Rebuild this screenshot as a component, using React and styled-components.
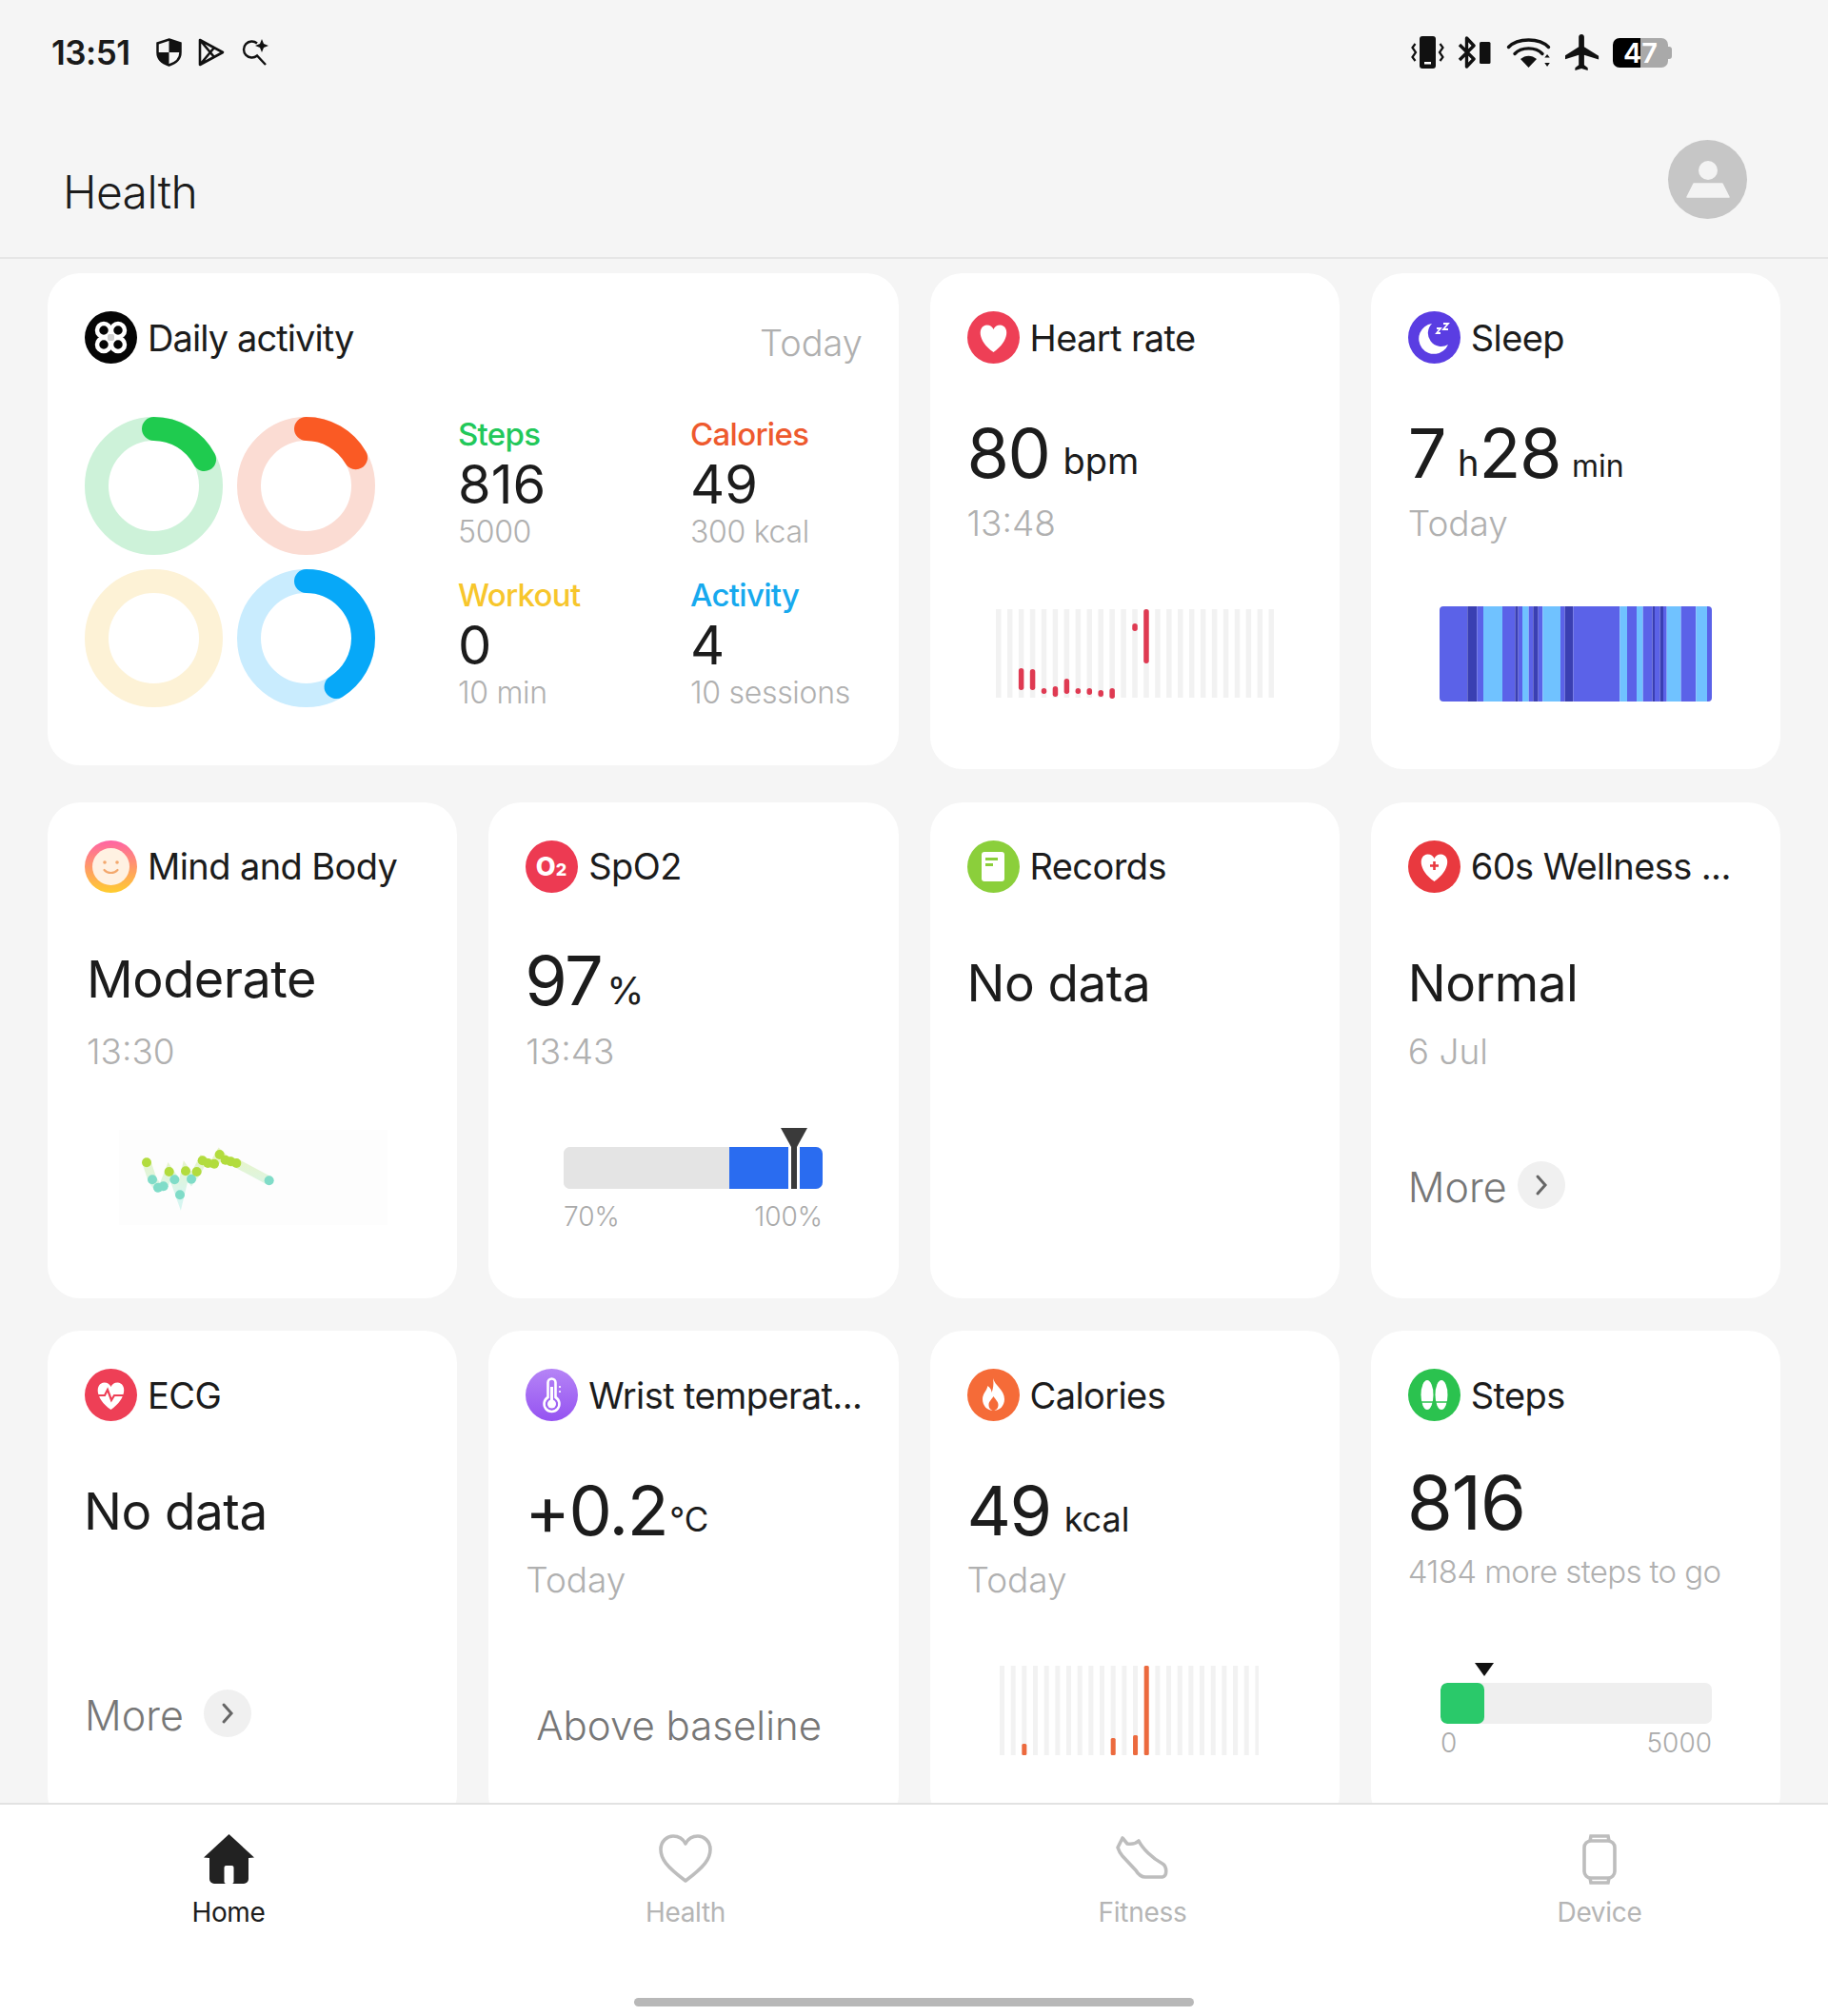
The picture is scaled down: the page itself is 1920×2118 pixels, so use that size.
import React from 'react';
import styled, { createGlobalStyle } from 'styled-components';

const Global = createGlobalStyle`
  html, body { margin: 0; padding: 0; background: #f5f5f5; }
  body { font-family: Inter, "Noto Sans", "Liberation Sans", sans-serif; color: #1c1c1c; -webkit-font-smoothing: antialiased; }
  * { box-sizing: border-box; }
`;

const Screen = styled.div`
  width: 1920px; height: 2118px; display: flex; flex-direction: column; overflow: hidden; background: #f5f5f5;
`;
const StatusBar = styled.div`
  height: 110px; flex: none; display: flex; align-items: center; padding: 0 0 0 54px;
`;
const Clock = styled.span`
  font-size: 35px; font-weight: 600; line-height: 40px; letter-spacing: -0.5px; color: #1a1a1a; margin-right: 27px;
`;
const LeftIcons = styled.div`display: flex; align-items: center; gap: 17px;`;
const RightIcons = styled.div`
  margin-left: auto; margin-right: 168px; display: flex; align-items: center; gap: 14px;
`;
const Battery = styled.div`
  position: relative; width: 58px; height: 31px; border-radius: 7px; display: flex; align-items: center; justify-content: center;
  background: linear-gradient(90deg, #000 0 50%, #a9a9a9 50% 100%);
  color: #fff; font-size: 29px; font-weight: 600; line-height: 31px;
  &::after { content: ''; position: absolute; right: -4px; top: 9px; width: 4px; height: 13px; border-radius: 0 3px 3px 0; background: #a9a9a9; }
`;
const Header = styled.header`
  height: 162px; flex: none; display: flex; padding: 37px 85px 0 66px; justify-content: space-between; border-bottom: 2px solid #e6e6e6;
`;
const PageTitle = styled.h1`
  margin: 25px 0 0; font-size: 48px; font-weight: 300; line-height: 60px; letter-spacing: -0.6px; color: #1c1c1c;
`;
const Main = styled.main`
  flex: 1; min-height: 0; overflow: hidden; padding: 15px 50px 0;
  display: grid; grid-template-columns: repeat(4, 1fr); grid-template-rows: repeat(3, 521px); gap: 34.5px 33px; align-content: start;
`;
const Card = styled.section`
  background: #fff; border-radius: 34px; padding: 40px 39px 0; min-width: 0;
  grid-column: span ${p => p.$span || 1};
  height: ${p => p.$h || 521}px; align-self: start;
`;
const CardHead = styled.div`display: flex; align-items: center; gap: 11px; height: 55px;`;
const CardTitle = styled.h2`
  margin: 0; font-size: 38px; font-weight: 400; line-height: 46px; letter-spacing: ${p => p.$ls ?? -0.6}px; white-space: nowrap; color: #1c1c1c;
`;
const HeadNote = styled.span`
  margin-left: auto; align-self: flex-start; margin-top: 10px; margin-right: -1.500px; font-size: 38px; font-weight: 300; line-height: 46px; color: #b0b0b0;
`;
const ValueRow = styled.div`
  margin-top: ${p => p.$mt}px; margin-left: ${p => p.$ml || 0}px; height: 84px; line-height: 84px; white-space: nowrap;
`;
const BigNumber = styled.span`font-size: ${p => p.$size || 72}px; font-weight: 400; letter-spacing: -1.500px; color: #1c1c1c;`;
const StatusWord = styled.span`font-size: ${p => p.$size || 53}px; font-weight: 400; letter-spacing: -0.5px; color: #1c1c1c;`;
const Unit = styled.span`
  font-size: ${p => p.$size || 38}px; font-weight: 400; line-height: 1; vertical-align: ${p => p.$raise ?? 4}px;
  margin-left: ${p => p.$gap ?? 14}px; color: #1c1c1c;
`;
const Sub = styled.div`
  margin-top: ${p => p.$mt}px; margin-left: ${p => p.$ml || 0}px; font-size: ${p => p.$size || 37}px; font-weight: 300; line-height: ${p => p.$lh || 44}px;
  letter-spacing: ${p => p.$ls || 0}px; color: #b0b0b0; white-space: nowrap;
`;
const ChartBox = styled.div`
  margin-top: ${p => p.$mt}px; margin-left: ${p => p.$ml}px; line-height: 0;
`;
const MoreLink = styled.div`
  display: flex; align-items: center; gap: ${p => p.$gap || 11}px; margin-top: ${p => p.$mt}px; font-size: 43px; font-weight: 300; line-height: 50px; color: #777;
`;
const Chip = styled.span`
  width: 50px; height: 50px; border-radius: 50%; background: #f0f0f0; display: flex; align-items: center; justify-content: center; position: relative; top: -2px;
`;
const Note = styled.div`
  margin: ${p => p.$mt}px 0 0 11px; font-size: 42px; font-weight: 300; line-height: 50px; color: #777; white-space: nowrap;
`;

const ActivityBody = styled.div`display: flex; margin-top: 54px;`;
const Rings = styled.div`
  display: grid; grid-template-columns: 145px 145px; gap: 15px; margin: 2px 0 0 0; align-self: flex-start;
`;
const Stats = styled.div`
  display: grid; grid-template-columns: 244px 190px; row-gap: 27px; margin-left: 87px;
`;
const Stat = styled.div`display: flex; flex-direction: column;`;
const StatLabel = styled.span`font-size: 33px; line-height: 40px; font-weight: 500; letter-spacing: -0.7px; color: ${p => p.$color};`;
const StatNum = styled.span`font-size: 56px; line-height: 62px; margin-top: 2px; font-weight: 400; color: #1c1c1c;`;
const StatSub = styled.span`font-size: 32px; line-height: 38px; font-weight: 300; letter-spacing: -0.3px; color: #b0b0b0; white-space: nowrap;`;

const Gauge = styled.div`
  position: relative; width: ${p => p.$w}px; padding-top: ${p => p.$pt}px;
`;
const Track = styled.div`
  height: ${p => p.$h}px; border-radius: 7px; overflow: hidden; display: flex; background: ${p => p.$bg};
`;
const Filled = styled.div`background: ${p => p.$color}; height: 100%;`;
const GaugeMark = styled.svg`position: absolute; top: 0; left: ${p => p.$left}px;`;
const GaugeLabels = styled.div`
  display: flex; justify-content: space-between; margin-top: ${p => p.$mt}px; font-size: 28px; font-weight: 300; line-height: 34px; color: #aaa;
`;

const Nav = styled.nav`
  height: 224px; flex: none; background: #fff; border-top: 2px solid #e2e2e2; position: relative;
  display: grid; grid-template-columns: repeat(4, 480px); align-content: start; padding-top: 30px;
`;
const NavItem = styled.div`
  display: flex; flex-direction: column; align-items: center; color: ${p => (p.$active ? '#1c1c1c' : '#b5b5b5')};
`;
const NavIcon = styled.div`height: 54px; display: flex; align-items: center; justify-content: center; line-height: 0;`;
const NavLabel = styled.span`margin-top: 12px; font-size: 28px; font-weight: 400; line-height: 34px; letter-spacing: -0.3px;`;
const HomeBar = styled.div`
  position: absolute; left: 666px; top: 203px; width: 588px; height: 9px; border-radius: 5px; background: #b8b8b8;
`;
const Avatar = styled.div`
  width: 83px; height: 83px; border-radius: 50%; background: #c6c6c6; display: flex; align-items: center; justify-content: center;
`;

const Icon = ({ bg, id, stops, children }) => (
  <svg width="55" height="55" viewBox="0 0 55 55" style={{ flex: 'none' }}>
    {stops && (
      <defs>
        <linearGradient id={id} x1="0" y1="0" x2="0" y2="1">
          <stop offset="0" stopColor={stops[0]} />
          <stop offset="1" stopColor={stops[1]} />
        </linearGradient>
      </defs>
    )}
    <circle cx="27.5" cy="27.5" r="27.5" fill={stops ? `url(#${id})` : bg} />
    {children}
  </svg>
);

const HEART = 'M27.5 43C10 31 11 15 20.5 14.5C24 14.5 26.5 16.5 27.5 19C28.5 16.5 31 14.5 34.5 14.5C44 15 45 31 27.5 43Z';

const DailyIcon = () => (
  <Icon bg="#050505">
    <g fill="none" stroke="#fff" strokeWidth="4.5">
      <circle cx="20" cy="20" r="7" /><circle cx="35" cy="20" r="7" />
      <circle cx="20" cy="35" r="7" /><circle cx="35" cy="35" r="7" />
    </g>
    <rect x="24" y="24" width="7" height="7" rx="2" fill="#cfcfcf" />
  </Icon>
);
const HeartIcon = () => <Icon bg="#ee3f56"><path d={HEART} fill="#fff" /></Icon>;
const SleepIcon = () => (
  <Icon bg="#5a3de2">
    <path d="M25 13a16 16 0 1 0 17 22a14 14 0 0 1-17-22Z" fill="#fff" />
    <path d="M30 18h4l-4 5h4M37 13h5l-5 6h5" fill="none" stroke="#fff" strokeWidth="1.8" />
  </Icon>
);
const MindIcon = () => (
  <Icon id="mindg" stops={['#ff63a5', '#ffcd2e']}>
    <circle cx="27.5" cy="27.5" r="19.5" fill="#fff1e2" />
    <circle cx="21" cy="23" r="1.8" fill="#f3a86d" /><circle cx="34" cy="23" r="1.8" fill="#f3a86d" />
    <path d="M20.5 31c3.5 4 10.5 4 14 0" fill="none" stroke="#f3a86d" strokeWidth="2.2" strokeLinecap="round" />
  </Icon>
);
const SpoIcon = () => (
  <Icon bg="#ed3a52">
    <text x="27" y="37" textAnchor="middle" fontSize="27" fontWeight="800" fill="#fff" fontFamily="Inter, sans-serif">O<tspan fontSize="18">2</tspan></text>
  </Icon>
);
const RecordsIcon = () => (
  <Icon bg="#8bcf3b">
    <rect x="15" y="12" width="24" height="31" rx="3" fill="#fff" />
    <rect x="19" y="18" width="13" height="3" fill="#8bcf3b" /><rect x="19" y="24" width="8" height="3" fill="#8bcf3b" />
  </Icon>
);
const WellnessIcon = () => (
  <Icon bg="#e9393f">
    <path d={HEART} fill="#fff" />
    <path d="M27.5 22v9M23 26.5h9" stroke="#e9393f" strokeWidth="2.6" />
  </Icon>
);
const EcgIcon = () => (
  <Icon bg="#ee3f56">
    <path d={HEART} fill="#fff" />
    <path d="M11 28h10l3-6 4 11 3-5h13" fill="none" stroke="#ee3f56" strokeWidth="2.2" />
  </Icon>
);
const WristIcon = () => (
  <Icon id="wristg" stops={['#b584f6', '#9553f1']}>
    <path d="M23.5 30V14.5a4 4 0 0 1 8 0V30a8 8 0 1 1-8 0Z" fill="none" stroke="#fff" strokeWidth="2.6" />
    <circle cx="27.5" cy="37" r="4.5" fill="#fff" /><rect x="26" y="19" width="3" height="16" fill="#fff" />
    <circle cx="36" cy="19" r="1.1" fill="#fff" /><circle cx="36" cy="24" r="1.1" fill="#fff" />
  </Icon>
);
const CaloriesIcon = () => (
  <Icon bg="#f56b38">
    <path d="M27 10c2 8 12 12 12 22c0 7-5 12-11.500 12C21 44 16 39 16 32c0-6 4-8 5.500-14c3 2 4 5 4 7c1.500-3 2.500-9 1.500-15Z" fill="#fff" />
    <path d="M27.500 29c1.500 3 5 5 5 9c0 3.500-2.500 6-5 6s-5-2.500-5-6c0-4 3.500-6 5-9Z" fill="#f56b38" />
  </Icon>
);
const StepsIcon = () => (
  <Icon bg="#2bc24f">
    <ellipse cx="20" cy="27.500" rx="6.500" ry="15.500" fill="#fff" />
    <ellipse cx="35" cy="27.500" rx="6.500" ry="15.500" fill="#fff" />
    <path d="M13 35h14M28 35h14" stroke="#2bc24f" strokeWidth="1.500" />
  </Icon>
);

const Ring = ({ track, arc, deg }) => {
  const c = 2 * Math.PI * 60;
  return (
    <svg width="145" height="145" viewBox="0 0 145 145">
      <circle cx="72.500" cy="72.500" r="60" fill="none" stroke={track} strokeWidth="25" />
      {deg > 0 && (
        <circle cx="72.500" cy="72.500" r="60" fill="none" stroke={arc} strokeWidth="25" strokeLinecap="round"
          strokeDasharray={`${(deg / 360) * c} ${c}`} transform="rotate(-90 72.500 72.500)" />
      )}
    </svg>
  );
};

const HR_RED = [[2, 62, 85], [3, 63, 85], [4, 83, 89], [5, 81, 92], [6, 73, 89], [7, 83, 89], [8, 83, 90], [9, 85, 92], [10, 83, 94], [12, 15, 23], [13, 0, 57]];
const HeartChart = () => (
  <svg width="295" height="95" viewBox="0 0 295 95">
    {Array.from({ length: 25 }, (_, i) => <rect key={i} x={1 + i * 11.94} y="0" width="5.500" height="93" fill="#f2f2f2" />)}
    {HR_RED.map(([i, a, b]) => <rect key={i} x={1 + i * 11.94} y={a} width="5.500" height={b - a} rx="2.700" fill="#df3a52" />)}
  </svg>
);

const SLEEP = [[0, 88, 'b'], [88, 118, 'd'], [118, 138, 'b'], [138, 198, 'l'], [198, 238, 'b'], [238, 248, 'd'], [248, 261, 'b'], [261, 281, 'l'], [281, 295, 'b'], [295, 311, 'd'], [311, 325, 'b'], [325, 381, 'l'], [381, 395, 'b'], [395, 421, 'd'], [421, 568, 'b'], [568, 591, 'l'], [591, 621, 'b'], [621, 641, 'l'], [641, 671, 'b'], [671, 678, 'd'], [678, 695, 'b'], [695, 705, 'd'], [705, 716, 'b'], [716, 761, 'l'], [761, 808, 'b'], [808, 843, 'l'], [843, 858, 'b']];
const SLEEP_C = { b: '#5b62e8', d: '#3a3fb2', l: '#70c2ff' };
const SleepChart = () => (
  <svg width="286" height="100" viewBox="0 0 858 100" preserveAspectRatio="none">
    <defs><clipPath id="slp"><rect width="858" height="100" rx="12" ry="4" /></clipPath></defs>
    <g clipPath="url(#slp)">
      {SLEEP.map(([a, b, k]) => <rect key={a} x={a} y="0" width={b - a} height="100" fill={SLEEP_C[k]} />)}
    </g>
  </svg>
);

const MOOD = [[102, 153, 0], [120, 207, 1], [138, 232, 1], [155, 228, 1], [173, 182, 0], [190, 207, 1], [207, 255, 1], [225, 180, 0], [243, 205, 1], [260, 182, 0], [278, 147, 0], [295, 155, 0], [315, 157, 0], [332, 128, 0], [350, 145, 0], [367, 150, 0], [385, 155, 0], [488, 210, 1]];
const MindChart = () => (
  <svg width="282" height="100" viewBox="0 0 846 300">
    <defs>
      <linearGradient id="moodg" gradientUnits="userSpaceOnUse" x1="0" y1="90" x2="0" y2="205">
        <stop offset="0" stopColor="#cfe98a" /><stop offset="1" stopColor="#a7ece0" />
      </linearGradient>
    </defs>
    <rect width="846" height="300" fill="#fdfdfd" />
    <polyline points={MOOD.map(([x, y]) => `${x - 15},${y - 50}`).join(' ')} fill="none" stroke="url(#moodg)" strokeWidth="28" strokeOpacity=".45" />
    {MOOD.map(([x, y, t]) => <circle key={x} cx={x - 15} cy={y - 50} r="15" fill={t ? '#80dcc8' : '#b2dc3e'} />)}
  </svg>
);

const CAL_RED = [[2, 82], [10, 76], [12, 73], [13, 0]];
const CaloriesChart = () => (
  <svg width="272" height="94" viewBox="0 0 272 94">
    {Array.from({ length: 24 }, (_, i) => <rect key={i} x={i * 11.67} y="0" width="5" height="94" fill="#f2f2f2" />)}
    {CAL_RED.map(([i, a]) => <rect key={i} x={i * 11.67} y={a} width="5" height={94 - a} rx="1.500" fill="#ec6a3e" />)}
  </svg>
);

const Shield = () => (
  <svg width="27" height="30" viewBox="0 0 27 30">
    <path d="M13.500 1.500L25.500 5.500V15C25.500 22 20 26.500 13.500 28.500C7 26.500 1.500 22 1.500 15V5.500Z" fill="none" stroke="#111" strokeWidth="2.500" />
    <path d="M13.500 1.500L25.500 5.500V15H13.500ZM13.500 15V28.500C7 26.500 1.500 22 1.500 15Z" fill="#111" />
  </svg>
);
const PlayStore = () => (
  <svg width="28" height="30" viewBox="0 0 28 30">
    <path d="M2 2L26 15L2 28ZM2 2L17 20M2 28L17 10" fill="none" stroke="#111" strokeWidth="2.600" strokeLinejoin="round" />
  </svg>
);
const SearchSpark = () => (
  <svg width="29" height="28" viewBox="0 0 29 28">
    <path d="M17 4.500A8.500 8.500 0 1 0 17 17.500L26 27" fill="none" stroke="#111" strokeWidth="2.400" />
    <path d="M22 0L24 5L29 7L24 9L22 14L20 9L15 7L20 5Z" fill="#111" />
  </svg>
);
const Vibrate = () => (
  <svg width="35" height="34" viewBox="0 0 35 34">
    <rect x="9" y="0" width="17" height="34" rx="3" fill="#111" />
    <rect x="14" y="27" width="7" height="2.500" fill="#fff" />
    <path d="M4.500 8L1.500 12L5 17L1.500 22L4.500 26M30.500 8L33.500 12L30 17L33.500 22L30.500 26" fill="none" stroke="#111" strokeWidth="2.200" />
  </svg>
);
const BluetoothRect = () => (
  <svg width="35" height="34" viewBox="0 0 35 34">
    <path d="M2 9L17 24L9.500 32V2L17 10L2 25" fill="none" stroke="#111" strokeWidth="3.400" strokeLinejoin="round" />
    <rect x="23" y="6" width="11.500" height="23" rx="1.500" fill="#111" />
  </svg>
);
const Wifi = () => (
  <svg width="50" height="34" viewBox="-3 0 50 34">
    <g fill="none" stroke="#111" strokeWidth="3.400" strokeLinecap="round">
      <path d="M1.500 11.500C11 1.500 34 1.500 43.500 11.500" /><path d="M8 18.500C15 11 30 11 37 18.500" />
    </g>
    <path d="M14 24C19 19.500 26 19.500 31 24L22.500 33Z" fill="#111" />
    <path d="M40 21.500L45.500 21.500L42.750 18ZM40 27L45.500 27L42.750 31Z" fill="#111" transform="translate(-.7 1)" />
  </svg>
);
const Plane = () => (
  <svg width="36" height="38" viewBox="3 2 18 20">
    <path d="M21 16v-2l-8-5V3.500c0-.83-.67-1.500-1.500-1.500S10 2.670 10 3.500V9l-8 5v2l8-2.500V19l-2 1.500V22l3.500-1 3.500 1v-1.500L13 19v-5.500l8 2.500z" fill="#111" />
  </svg>
);
const PersonGlyph = () => (
  <svg width="46" height="40" viewBox="0 0 46 40">
    <circle cx="23" cy="10" r="10" fill="#f3f3f3" />
    <path d="M8 24H38L45 38H1Z" fill="#f3f3f3" strokeLinejoin="round" stroke="#f3f3f3" strokeWidth="1.500" />
  </svg>
);
const Chevron = () => (
  <svg width="14" height="24" viewBox="0 0 14 24"><path d="M3 3L11 12L3 21" fill="none" stroke="#666" strokeWidth="3" strokeLinecap="round" /></svg>
);

const HomeNav = () => (
  <svg width="53" height="52" viewBox="0 0 53 52">
    <path d="M26.500 0L53 24.500L47 25V47a5 5 0 0 1-5 5H11a5 5 0 0 1-5-5V25L0 24.500Z" fill="#222" />
    <rect x="21.500" y="33" width="10" height="19" rx="2" fill="#fff" />
  </svg>
);
const HeartNav = () => (
  <svg width="56" height="52" viewBox="0 0 56 52">
    <path d="M28 49C8 34 2 26 2 16C2 7 9 2 15 2C21 2 25.500 5 28 10C30.500 5 35 2 41 2C47 2 54 7 54 16C54 26 48 34 28 49Z" fill="none" stroke="#bdbdbd" strokeWidth="3.600" strokeLinejoin="round" />
  </svg>
);
const ShoeNav = () => (
  <svg width="56" height="50" viewBox="0 0 56 50">
    <path d="M2 13L7 3L12 9C18 10 21 9 24 6C28 14 38 24 49 30C54 33 54 43 49 44H31C27 44 24 42 21 37L7 22C4 19 3 16 2 13Z" fill="none" stroke="#bdbdbd" strokeWidth="3.600" strokeLinejoin="round" />
  </svg>
);
const DeviceNav = () => (
  <svg width="38" height="53" viewBox="0 0 38 53">
    <rect x="3" y="7" width="32" height="39" rx="7" fill="none" stroke="#bdbdbd" strokeWidth="3.600" />
    <path d="M9 7L10 2H28L29 7M9 46L10 51H28L29 46" fill="none" stroke="#bdbdbd" strokeWidth="3.600" />
  </svg>
);

const App = () => (
  <Screen>
    <Global />
    <StatusBar>
      <Clock>13:51</Clock>
      <LeftIcons><Shield /><PlayStore /><SearchSpark /></LeftIcons>
      <RightIcons>
        <Vibrate /><BluetoothRect /><Wifi /><Plane />
        <Battery>47</Battery>
      </RightIcons>
    </StatusBar>
    <Header>
      <PageTitle>Health</PageTitle>
      <Avatar><PersonGlyph /></Avatar>
    </Header>
    <Main>
      <Card $span={2} $h={517}>
        <CardHead>
          <DailyIcon /><CardTitle $ls={-0.9}>Daily activity</CardTitle><HeadNote>Today</HeadNote>
        </CardHead>
        <ActivityBody>
          <Rings>
            <Ring track="#cdf2d9" arc="#1fcb4f" deg={62} />
            <Ring track="#fbdcd3" arc="#fa5a24" deg={60} />
            <Ring track="#fdf2d6" arc="#fdf2d6" deg={0} />
            <Ring track="#c9ecfe" arc="#07a8f8" deg={148} />
          </Rings>
          <Stats>
            <Stat><StatLabel $color="#22c85a">Steps</StatLabel><StatNum>816</StatNum><StatSub>5000</StatSub></Stat>
            <Stat><StatLabel $color="#ee5a2e">Calories</StatLabel><StatNum>49</StatNum><StatSub>300 kcal</StatSub></Stat>
            <Stat><StatLabel $color="#f7c62c">Workout</StatLabel><StatNum>0</StatNum><StatSub>10 min</StatSub></Stat>
            <Stat><StatLabel $color="#17a9ee">Activity</StatLabel><StatNum>4</StatNum><StatSub>10 sessions</StatSub></Stat>
          </Stats>
        </ActivityBody>
      </Card>

      <Card>
        <CardHead><HeartIcon /><CardTitle>Heart rate</CardTitle></CardHead>
        <ValueRow $mt={52}><BigNumber>80</BigNumber><Unit>bpm</Unit></ValueRow>
        <Sub $mt={10}>13:48</Sub>
        <ChartBox $mt={67.5} $ml={29.5}><HeartChart /></ChartBox>
      </Card>

      <Card>
        <CardHead><SleepIcon /><CardTitle>Sleep</CardTitle></CardHead>
        <ValueRow $mt={52}>
          <BigNumber>7</BigNumber><Unit $gap={13} $raise={2}>h</Unit><BigNumber>28</BigNumber><Unit $size={32} $gap={12} $raise={1}>min</Unit>
        </ValueRow>
        <Sub $mt={10}>Today</Sub>
        <ChartBox $mt={64.5} $ml={33}><SleepChart /></ChartBox>
      </Card>

      <Card>
        <CardHead><MindIcon /><CardTitle>Mind and Body</CardTitle></CardHead>
        <ValueRow $mt={49} $ml={2}><StatusWord $size={54}>Moderate</StatusWord></ValueRow>
        <Sub $mt={12.5} $ml={2}>13:30</Sub>
        <ChartBox $mt={59.5} $ml={36}><MindChart /></ChartBox>
      </Card>

      <Card>
        <CardHead><SpoIcon /><CardTitle>SpO2</CardTitle></CardHead>
        <ValueRow $mt={50} $ml={-1}><BigNumber>97</BigNumber><Unit $gap={5} $size={40} $raise={1}>%</Unit></ValueRow>
        <Sub $mt={11}>13:43</Sub>
        <ChartBox $mt={58.5} $ml={39.75}>
          <Gauge $w={272} $pt={19.5}>
            <Track $h={44.5} $bg="#e4e4e4">
              <Filled $color="#e4e4e4" style={{ width: 174 }} />
              <Filled $color="#2a6cf0" style={{ flex: 1 }} />
            </Track>
            <GaugeMark $left={228} width="28" height="64" viewBox="0 0 28 64">
              <rect x="8" y="19" width="12" height="45" fill="#fff" />
              <path d="M0 0H28L17 20H11Z" fill="#3a3a3a" />
              <rect x="11" y="18" width="6" height="46" fill="#3a3a3a" />
            </GaugeMark>
            <GaugeLabels $mt={12}><span>70%</span><span>100%</span></GaugeLabels>
          </Gauge>
        </ChartBox>
      </Card>

      <Card>
        <CardHead><RecordsIcon /><CardTitle>Records</CardTitle></CardHead>
        <ValueRow $mt={53}><StatusWord>No data</StatusWord></ValueRow>
      </Card>

      <Card>
        <CardHead><WellnessIcon /><CardTitle>60s Wellness ...</CardTitle></CardHead>
        <ValueRow $mt={53}><StatusWord>Normal</StatusWord></ValueRow>
        <Sub $mt={8.5}>6 Jul</Sub>
        <MoreLink $mt={94.5}>More<Chip><Chevron /></Chip></MoreLink>
      </Card>

      <Card>
        <CardHead><EcgIcon /><CardTitle>ECG</CardTitle></CardHead>
        <ValueRow $mt={53} $ml={-1}><StatusWord>No data</StatusWord></ValueRow>
        <MoreLink $mt={147} $gap={21}>More<Chip><Chevron /></Chip></MoreLink>
      </Card>

      <Card>
        <CardHead><WristIcon /><CardTitle>Wrist temperat...</CardTitle></CardHead>
        <ValueRow $mt={52} $ml={-1}><BigNumber>+0.2</BigNumber><Unit $gap={2} $size={35}>°C</Unit></ValueRow>
        <Sub $mt={9}>Today</Sub>
        <Note $mt={106}>Above baseline</Note>
      </Card>

      <Card>
        <CardHead><CaloriesIcon /><CardTitle>Calories</CardTitle></CardHead>
        <ValueRow $mt={52}><BigNumber>49</BigNumber><Unit $size={36}>kcal</Unit></ValueRow>
        <Sub $mt={9}>Today</Sub>
        <ChartBox $mt={68} $ml={34.5}><CaloriesChart /></ChartBox>
      </Card>

      <Card>
        <CardHead><StepsIcon /><CardTitle>Steps</CardTitle></CardHead>
        <ValueRow $mt={43.5} $ml={-1}><BigNumber $size={78}>816</BigNumber></ValueRow>
        <Sub $mt={10.5} $size={33} $lh={40} $ls={-0.6}>4184 more steps to go</Sub>
        <ChartBox $mt={76} $ml={34.25}>
          <Gauge $w={285} $pt={21}>
            <Track $h={43} $bg="#efefef">
              <Filled $color="#2ac96a" style={{ width: 46, borderRadius: 7 }} />
            </Track>
            <GaugeMark $left={36} width="20" height="14" viewBox="0 0 20 14"><path d="M0 0H20L10 14Z" fill="#111" /></GaugeMark>
            <GaugeLabels $mt={3}><span>0</span><span>5000</span></GaugeLabels>
          </Gauge>
        </ChartBox>
      </Card>
    </Main>
    <Nav>
      <NavItem $active><NavIcon><HomeNav /></NavIcon><NavLabel>Home</NavLabel></NavItem>
      <NavItem><NavIcon><HeartNav /></NavIcon><NavLabel>Health</NavLabel></NavItem>
      <NavItem><NavIcon><ShoeNav /></NavIcon><NavLabel>Fitness</NavLabel></NavItem>
      <NavItem><NavIcon><DeviceNav /></NavIcon><NavLabel>Device</NavLabel></NavItem>
      <HomeBar />
    </Nav>
  </Screen>
);

export default App;
